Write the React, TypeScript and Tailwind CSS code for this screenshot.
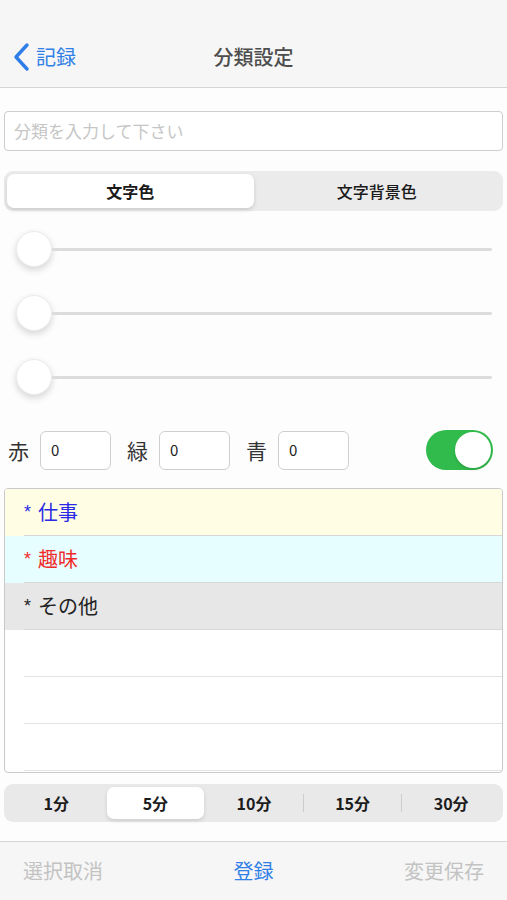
import { useState } from 'react';

const font = { fontFamily: '"Noto Sans CJK JP", "Liberation Sans", sans-serif' };

const categories = [
  { name: '仕事', color: 'text-[#2a2ae6]', bg: 'bg-[#fffee4]' },
  { name: '趣味', color: 'text-[#f02b2b]', bg: 'bg-[#e6feff]' },
  { name: 'その他', color: 'text-[#222222]', bg: 'bg-[#e7e7e7]' },
];

const intervals = ['1分', '5分', '10分', '15分', '30分'];

function Slider() {
  return (
    <div className="flex h-[64px] items-center pl-3 pr-[11px]">
      <div className="h-[36px] w-[36px] shrink-0 rounded-full border border-[#ececec] bg-white shadow-[0_3px_7px_rgba(0,0,0,0.16)]" />
      <div className="h-[3px] flex-1 rounded-r-full bg-[#dcdcdc]" />
    </div>
  );
}

function ColorInput({ label }: { label: string }) {
  return (
    <div className="flex items-center">
      <span className="w-[22px] text-[21px] leading-none text-[#333]">{label}</span>
      <div className="ml-[10px] flex h-[39px] w-[71px] items-center rounded-[6px] border border-[#cfcfcf] bg-white pl-[10px] text-[15px] text-[#222]">
        0
      </div>
    </div>
  );
}

export default function App() {
  const [tab, setTab] = useState(0);
  const [interval, setInterval] = useState(1);

  return (
    <div className="flex h-[900px] w-[507px] flex-col overflow-hidden bg-[#fdfdfd]" style={font}>
      {/* nav bar */}
      <div className="h-[88px] shrink-0 border-b border-[#d4d4d4] bg-[#f6f6f6] pt-[37px]">
        <div className="grid h-[40px] grid-cols-[1fr_auto_1fr] items-center">
          <div className="flex items-center pl-[12px] text-[#3180e6]">
            <svg width="18" height="30" viewBox="0 0 18 30" fill="none">
              <path d="M15 3 L4 15 L15 27" stroke="#2f7ee8" strokeWidth="3.4" strokeLinecap="round" strokeLinejoin="round" />
            </svg>
            <span className="ml-[6px] text-[20px] leading-none">記録</span>
          </div>
          <div className="text-[20px] font-medium leading-none text-[#4d4d4d]">分類設定</div>
          <div />
        </div>
      </div>

      <div className="flex flex-col px-1">
        {/* name input */}
        <div className="mt-[23px] flex h-[40px] items-center rounded-[4px] border border-[#cdcdcd] bg-white pl-[9px] text-[17px] text-[#c6c6c6]">
          分類を入力して下さい
        </div>

        {/* text / background tabs */}
        <div className="mt-[20px] flex h-[40px] rounded-[9px] bg-[#ebebeb] p-[3px]">
          {['文字色', '文字背景色'].map((t, i) => (
            <button
              key={t}
              onClick={() => setTab(i)}
              className={`flex-1 rounded-[7px] text-[16px] text-[#1a1a1a] ${
                tab === i ? 'bg-white font-bold shadow-[0_2px_4px_rgba(0,0,0,0.14)]' : 'font-medium'
              }`}
            >
              {t}
            </button>
          ))}
        </div>

        {/* rgb sliders */}
        <div className="mt-[6px] flex flex-col">
          <Slider />
          <Slider />
          <Slider />
        </div>

        {/* rgb values */}
        <div className="mt-[21px] flex h-[40px] items-center pl-1 pr-[10px]">
          <ColorInput label="赤" />
          <div className="ml-[16px]">
            <ColorInput label="緑" />
          </div>
          <div className="ml-[16px]">
            <ColorInput label="青" />
          </div>
          <div className="ml-auto flex h-[40px] w-[67px] items-center justify-end rounded-full bg-[#31bb4c] p-[2px]">
            <div className="h-[36px] w-[36px] rounded-full bg-white shadow-[0_2px_3px_rgba(0,0,0,0.12)]" />
          </div>
        </div>

        {/* category list */}
        <div className="mt-[18px] h-[285px] overflow-hidden rounded-[4px] border border-[#c9c9c9] bg-white">
          {categories.map((c) => (
            <div key={c.name} className={`h-[47px] ${c.bg}`}>
              <div className={`flex h-[46px] items-center pl-[19px] text-[20px] ${c.color}`}>
                <span className="mr-[7px] text-[18px] leading-none" style={{ fontFamily: '"Liberation Sans", sans-serif' }}>*</span>
                {c.name}
              </div>
              <div className="ml-[19px] h-px bg-[#d8d8d8]" />
            </div>
          ))}
          {[0, 1, 2].map((i) => (
            <div key={i} className="h-[47px]">
              <div className="h-[46px]" />
              <div className="ml-[19px] h-px bg-[#e2e2e2]" />
            </div>
          ))}
        </div>

        {/* interval segmented */}
        <div className="mt-[11px] flex h-[38px] rounded-[9px] bg-[#e9e9e9] p-[3px]">
          {intervals.map((t, i) => (
            <div key={t} className="flex flex-1 items-center">
              {i > 0 && (
                <div
                  className={`h-[18px] w-px ${
                    interval === i || interval === i - 1 ? 'bg-transparent' : 'bg-[#cdcdcd]'
                  }`}
                />
              )}
              <button
                onClick={() => setInterval(i)}
                className={`h-full flex-1 rounded-[7px] text-[16px] font-semibold text-[#1c1c1c] ${
                  interval === i ? 'bg-white shadow-[0_2px_4px_rgba(0,0,0,0.12)]' : ''
                }`}
              >
                {t}
              </button>
            </div>
          ))}
        </div>
      </div>

      {/* toolbar */}
      <div className="mt-[19px] flex h-[60px] items-center justify-between border-t border-[#d6d6d6] bg-[#f6f6f6] px-[23px] text-[20px]">
        <span className="text-[#c3c3c3]">選択取消</span>
        <span className="text-[#3180e6]">登録</span>
        <span className="text-[#c3c3c3]">変更保存</span>
      </div>
    </div>
  );
}
